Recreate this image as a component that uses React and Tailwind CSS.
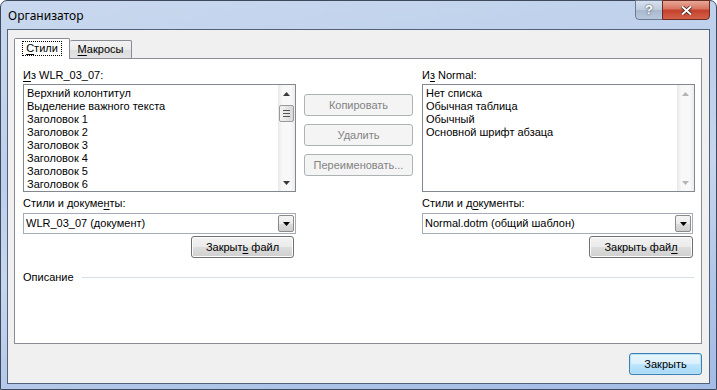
import React from "react";

const FONT = { fontFamily: '"Liberation Sans", Arial, sans-serif' };

function U({ children }) {
  return <span className="underline decoration-1 underline-offset-[2px]">{children}</span>;
}

function Arrow({ down, color }) {
  return (
    <svg width="7" height="4" viewBox="0 0 7 4">
      <path d={down ? "M0 0 L7 0 L3.5 4Z" : "M0 4 L3.5 0 L7 4Z"} fill={color} />
    </svg>
  );
}

function ScrollBar({ disabled }) {
  const c = disabled ? "#b4b4b4" : "#3a3a3a";
  return (
    <div className="flex w-[17px] flex-col bg-[linear-gradient(90deg,#e8e8e8,#f8f8f8_25%,#f8f8f8_75%,#ececec)]">
      <div className="flex h-[17px] items-center justify-center">
        <Arrow color={c} />
      </div>
      {!disabled && (
        <div className="ml-px mt-[3px] flex h-[17px] w-[15px] flex-col items-center justify-center gap-[2px] rounded-[2px] border border-[#9a9a9a] bg-[linear-gradient(90deg,#f2f2f2,#e6e6e6_50%,#d8d8d8)]">
          <div className="h-px w-[7px] bg-[#555]" />
          <div className="h-px w-[7px] bg-[#555]" />
          <div className="h-px w-[7px] bg-[#555]" />
        </div>
      )}
      <div className="flex-1" />
      <div className="flex h-[17px] items-center justify-center">
        <Arrow down color={c} />
      </div>
    </div>
  );
}

function ListBox({ items, width, disabledScroll }) {
  return (
    <div className={`flex h-[108px] border border-[#828790] bg-white ${width}`}>
      <div className="flex-1 pl-[3px] pt-[2px]">
        {items.map((it) => (
          <div key={it} className="h-[13px] text-[11px] leading-[13px] text-black">
            {it}
          </div>
        ))}
      </div>
      <ScrollBar disabled={disabledScroll} />
    </div>
  );
}

function Combo({ value, width }) {
  return (
    <div className={`flex h-[21px] items-center border border-[#a5acb5] bg-white ${width}`}>
      <span className="flex-1 pl-[2px] text-[11px] leading-[13px]">{value}</span>
      <div className="mr-px flex h-[17px] w-[16px] items-center justify-center rounded-[2px] border border-[#8b8b8b] bg-[linear-gradient(180deg,#f4f4f4,#ebebeb_50%,#dcdcdc_51%,#cfcfcf)]">
        <Arrow down color="#000" />
      </div>
    </div>
  );
}

function Button({ children, width, disabled, primary }) {
  const base = "flex h-[22px] items-center justify-center rounded-[3px] border text-[11px] leading-[13px]";
  let look = "border-[#707070] bg-[linear-gradient(180deg,#f2f2f2,#ebebeb_50%,#dddddd_51%,#cfcfcf)] text-black shadow-[inset_0_0_0_1px_#fcfcfc]";
  if (disabled) look = "border-[#adb2b5] bg-[#f4f4f4] text-[#838383]";
  if (primary)
    look = "border-[#3c7fb1] bg-[linear-gradient(180deg,#eaf6fd,#d9f0fc_50%,#bee6fd_51%,#a7d9f5)] text-black shadow-[inset_0_0_0_1px_#b9e1f7]";
  return (
    <div className={`${base} ${width} ${look}`}>
      <span>{children}</span>
    </div>
  );
}

export default function App() {
  const left = [
    "Верхний колонтитул",
    "Выделение важного текста",
    "Заголовок 1",
    "Заголовок 2",
    "Заголовок 3",
    "Заголовок 4",
    "Заголовок 5",
    "Заголовок 6",
  ];
  const right = ["Нет списка", "Обычная таблица", "Обычный", "Основной шрифт абзаца"];

  return (
    <div
      className="flex h-[390px] w-[717px] flex-col rounded-t-[7px] border border-[#3e4a5c] bg-[linear-gradient(170deg,#c9d8ee,#bccfeb_35%,#c6d6ee_55%,#b0c6e8_80%,#a3bce6)] px-[6px] pb-[5px]"
      style={FONT}
    >
      <div className="flex h-[28px] shrink-0 items-start">
        <div className="mt-[6px] pl-px text-[12px] text-black" style={{ fontFamily: '"Noto Sans", "Open Sans", sans-serif' }}>
          Организатор
        </div>
        <div className="flex-1" />
        <div className="-mt-px flex">
          <div className="flex h-[20px] w-[28px] items-center justify-center rounded-bl-[4px] border border-[#6d7c92] bg-[linear-gradient(180deg,#d7e1ee,#bdcbdd_50%,#a7b8cf_51%,#b9c8dc)] text-[13px] font-bold text-white [text-shadow:0_0_2px_#222]">
            ?
          </div>
          <div className="-ml-px flex h-[20px] w-[48px] items-center justify-center rounded-br-[4px] border border-[#6b2a22] bg-[linear-gradient(180deg,#e8a898,#d6735f_45%,#c4402b_50%,#d4614a)]">
            <svg width="11" height="9" viewBox="0 0 11 9">
              <path d="M1 0.5 L5.5 4.5 L10 0.5 M1 8.5 L5.5 4.5 L10 8.5" stroke="#3a1a14" strokeWidth="3.4" fill="none" />
              <path d="M1 0.5 L5.5 4.5 L10 0.5 M1 8.5 L5.5 4.5 L10 8.5" stroke="#fff" strokeWidth="2" fill="none" />
            </svg>
          </div>
        </div>
      </div>

      <div className="flex flex-1 flex-col border border-[#52607a] bg-[#f0f0f0] pl-[6px] pt-[8px] text-[11px] text-black">
        <div className="flex h-[20px] items-end">
          <div className="relative z-10 -mb-px flex h-[21px] w-[56px] items-start justify-center rounded-t-[2px] border border-b-0 border-[#898c95] bg-white pt-[2px]">
            <span className="border border-dotted border-black px-[3px] leading-[13px]">
              <U>С</U>тили
            </span>
          </div>
          <div className="flex h-[18px] w-[62px] items-center justify-center rounded-t-[2px] border border-b-0 border-l-0 border-[#898c95] bg-[linear-gradient(180deg,#f2f2f2,#ebebeb_50%,#dddddd_51%,#e4e4e4)] leading-[13px]">
            <span>
              <U>М</U>акросы
            </span>
          </div>
        </div>

        <div className="flex h-[286px] w-[688px] flex-col border border-[#898c95] bg-white pl-[8px] pt-[10px]">
          <div className="flex">
            <div className="flex w-[273px] flex-col">
              <div className="h-[13px] leading-[13px]">
                <U>И</U>з WLR_03_07:
              </div>
              <div className="mt-[2px]">
                <ListBox items={left} width="w-[273px]" />
              </div>
              <div className="mt-[5px] h-[13px] leading-[13px]">
                Стили и докуме<U>н</U>ты:
              </div>
              <div className="mt-[3px]">
                <Combo value="WLR_03_07 (документ)" width="w-[273px]" />
              </div>
              <div className="mt-[2px] flex justify-end pr-[2px]">
                <Button width="w-[103px]">
                  Закрыт<U>ь</U> файл
                </Button>
              </div>
            </div>

            <div className="ml-[8px] flex w-[109px] flex-col pt-[25px]">
              <Button disabled width="w-[109px]">Копировать</Button>
              <div className="mt-[8px]">
                <Button disabled width="w-[109px]">Удалить</Button>
              </div>
              <div className="mt-[8px]">
                <Button disabled width="w-[109px]">Переименовать...</Button>
              </div>
            </div>

            <div className="ml-[9px] flex w-[273px] flex-col">
              <div className="h-[13px] leading-[13px]">
                И<U>з</U> Normal:
              </div>
              <div className="mt-[2px]">
                <ListBox items={right} width="w-[273px]" disabledScroll />
              </div>
              <div className="mt-[5px] h-[13px] leading-[13px]">
                Стили и д<U>о</U>кументы:
              </div>
              <div className="mt-[3px]">
                <Combo value="Normal.dotm (общий шаблон)" width="w-[271px]" />
              </div>
              <div className="mt-[2px] flex justify-end pr-[2px]">
                <Button width="w-[104px]">
                  Закрыть фай<U>л</U>
                </Button>
              </div>
            </div>
          </div>

          <div className="mt-[13px] flex h-[13px] items-center pr-[7px]">
            <span className="leading-[13px]">Описание</span>
            <div className="ml-[8px] h-px flex-1 bg-[#d5dfe5]" />
          </div>
        </div>

        <div className="mt-[9px] flex w-[688px] justify-end">
          <Button primary width="w-[73px]">Закрыть</Button>
        </div>
      </div>
    </div>
  );
}
